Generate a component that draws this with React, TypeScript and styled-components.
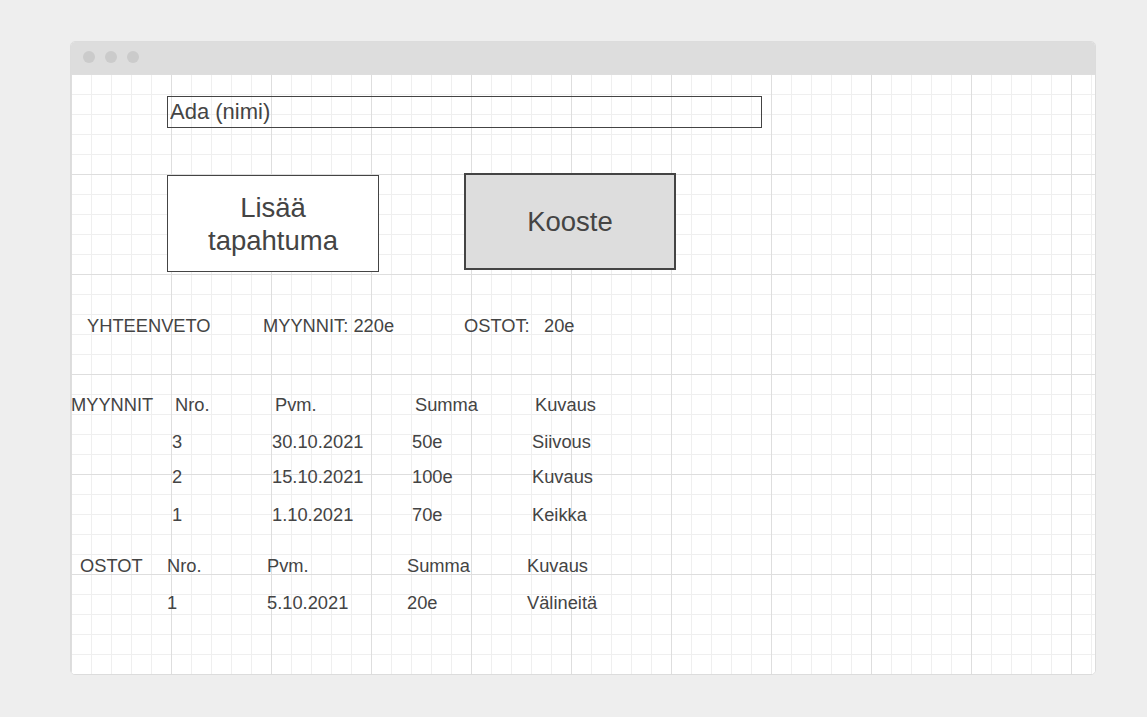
import React from "react";
import styled, { createGlobalStyle } from "styled-components";

const Global = createGlobalStyle`
  html, body { margin: 0; padding: 0; background: #eeeeee; }
  body { font-family: "Liberation Sans", Arial, sans-serif; color: #444; }
`;

const Page = styled.div`
  padding: 41px 0 0 70px;
  width: 1147px;
  height: 717px;
  box-sizing: border-box;
`;

const Window = styled.div`
  width: 1026px;
  border: 1px solid #dcdcdc;
  border-radius: 5px;
  overflow: hidden;
  box-sizing: border-box;
  background: #fff;
`;

const TitleBar = styled.div`
  height: 32px;
  background: #dddddd;
  display: flex;
  align-items: center;
  gap: 10px;
  padding-left: 12px;
  padding-bottom: 2px;
  box-sizing: border-box;
`;

const Dot = styled.span`
  width: 12px;
  height: 12px;
  border-radius: 50%;
  background: #cbcbcb;
`;

const Canvas = styled.div`
  height: 600px;
  background-color: #fff;
  background-image:
    linear-gradient(#dedede 1px, transparent 1px),
    linear-gradient(90deg, #dedede 1px, transparent 1px),
    linear-gradient(#efefef 1px, transparent 1px),
    linear-gradient(90deg, #efefef 1px, transparent 1px);
  background-size: 100px 100px, 100px 100px, 20px 20px, 20px 20px;
  display: flex;
  flex-direction: column;
  align-items: flex-start;
`;

const NameInput = styled.input`
  margin: 22px 0 0 96px;
  width: 595px;
  height: 32px;
  box-sizing: border-box;
  border: 1px solid #444;
  background: transparent;
  font-family: "Liberation Sans", Arial, sans-serif;
  font-size: 22px;
  color: #444;
  padding: 0 2px;
  outline: none;
`;

const ButtonRow = styled.div`
  display: flex;
  align-items: flex-start;
  margin: 45px 0 0 96px;
  gap: 85px;
`;

const Button = styled.button<{ $primary?: boolean }>`
  width: 212px;
  height: 97px;
  box-sizing: border-box;
  margin-top: ${(p) => (p.$primary ? "0" : "2px")};
  border: ${(p) => (p.$primary ? "2px" : "1px")} solid #444;
  background: ${(p) => (p.$primary ? "#dddddd" : "#ffffff")};
  font-family: "Liberation Sans", Arial, sans-serif;
  font-size: 27.5px;
  line-height: 33px;
  color: #444;
  padding: 0;
  display: flex;
  align-items: center;
  justify-content: center;
  text-align: center;
`;

const Summary = styled.div`
  display: flex;
  margin: 44px 0 0 16px;
  font-size: 18.3px;
  line-height: 20px;
`;

const SumItem = styled.span<{ $w?: number }>`
  width: ${(p) => (p.$w ? `${p.$w}px` : "auto")};
  white-space: pre;
`;

const Table = styled.div<{ $top: number }>`
  margin-top: ${(p) => p.$top}px;
  display: flex;
  flex-direction: column;
  font-size: 18.3px;
  line-height: 20px;
`;

const Row = styled.div<{ $top: number; $left: number }>`
  display: flex;
  margin-top: ${(p) => p.$top}px;
  padding-left: ${(p) => p.$left}px;
`;

const Cell = styled.span<{ $w?: number }>`
  width: ${(p) => (p.$w ? `${p.$w}px` : "auto")};
  white-space: nowrap;
`;

const COLS = [100, 140, 120];

type Data = { nro: string; pvm: string; summa: string; kuvaus: string };

const myynnit: Data[] = [
  { nro: "3", pvm: "30.10.2021", summa: "50e", kuvaus: "Siivous" },
  { nro: "2", pvm: "15.10.2021", summa: "100e", kuvaus: "Kuvaus" },
  { nro: "1", pvm: "1.10.2021", summa: "70e", kuvaus: "Keikka" },
];

const ostot: Data[] = [
  { nro: "1", pvm: "5.10.2021", summa: "20e", kuvaus: "Välineitä" },
];

function DataRow({ d, top, left }: { d: Data; top: number; left: number }) {
  return (
    <Row $top={top} $left={left}>
      <Cell $w={COLS[0]}>{d.nro}</Cell>
      <Cell $w={COLS[1]}>{d.pvm}</Cell>
      <Cell $w={COLS[2]}>{d.summa}</Cell>
      <Cell>{d.kuvaus}</Cell>
    </Row>
  );
}

function HeaderRow({ label, labelLeft, labelW }: { label: string; labelLeft: number; labelW: number }) {
  return (
    <Row $top={0} $left={labelLeft}>
      <Cell $w={labelW}>{label}</Cell>
      <Cell $w={COLS[0]}>Nro.</Cell>
      <Cell $w={COLS[1]}>Pvm.</Cell>
      <Cell $w={COLS[2]}>Summa</Cell>
      <Cell>Kuvaus</Cell>
    </Row>
  );
}

export default function App() {
  return (
    <>
      <Global />
      <Page>
        <Window>
          <TitleBar>
            <Dot />
            <Dot />
            <Dot />
          </TitleBar>
          <Canvas>
            <NameInput defaultValue="Ada (nimi)" />
            <ButtonRow>
              <Button>
                Lisää
                <br />
                tapahtuma
              </Button>
              <Button $primary>Kooste</Button>
            </ButtonRow>
            <Summary>
              <SumItem $w={176}>YHTEENVETO</SumItem>
              <SumItem $w={201}>MYYNNIT: 220e</SumItem>
              <SumItem $w={80}>OSTOT:</SumItem>
              <SumItem>20e</SumItem>
            </Summary>
            <Table $top={59}>
              <HeaderRow label="MYYNNIT" labelLeft={0} labelW={104} />
              <DataRow d={myynnit[0]} top={17} left={101} />
              <DataRow d={myynnit[1]} top={15} left={101} />
              <DataRow d={myynnit[2]} top={18} left={101} />
            </Table>
            <Table $top={31}>
              <HeaderRow label="OSTOT" labelLeft={9} labelW={87} />
              {ostot.map((d, i) => (
                <DataRow key={i} d={d} top={17} left={96} />
              ))}
            </Table>
          </Canvas>
        </Window>
      </Page>
    </>
  );
}
